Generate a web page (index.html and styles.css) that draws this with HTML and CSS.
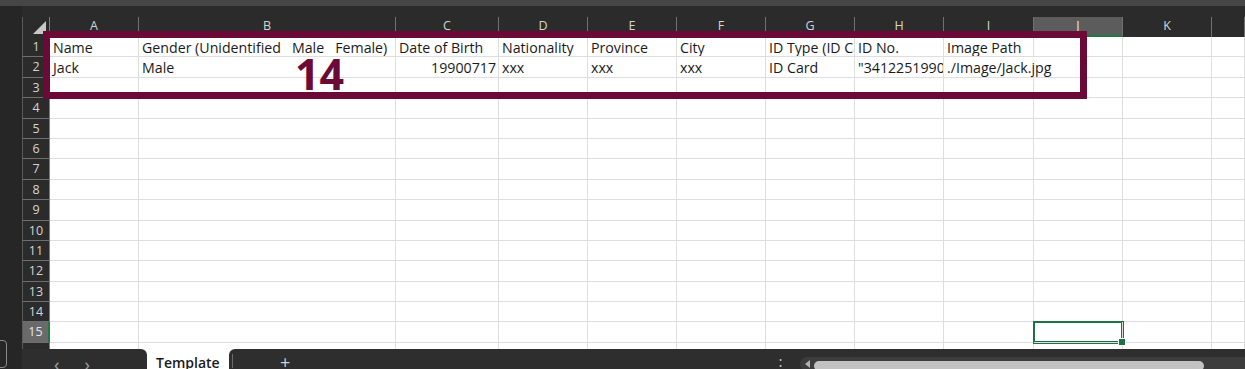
FILE: index.html
```html
<!DOCTYPE html>
<html lang="en">
<head>
    <meta charset="UTF-8">
    <title>Template - Sheet</title>
    <link rel="stylesheet" href="styles.css">
</head>
<body>

    <div class="app">
        <div class="edge"></div>

        <div class="main">
            <!-- Left gutter -->
            <div class="gutter">
                <div class="gutter-btn"></div>
            </div>

            <div class="workspace">
                <div class="spacer"></div>

                <!-- Sheet grid, filled by the script below -->
                <div class="grid" id="grid"></div>

                <!-- Sheet tabs -->
                <div class="tabbar">
                    <div class="tab-nav">
                        <span class="arrow">&lsaquo;</span>
                        <span class="arrow">&rsaquo;</span>
                    </div>
                    <div class="tab active">Template</div>
                    <div class="tab-rest">
                        <span class="sep"></span>
                        <span class="add">+</span>
                        <span class="dots">&#8942;</span>
                        <div class="hscroll">
                            <span class="left-arrow"></span>
                            <span class="thumb"></span>
                        </div>
                    </div>
                </div>
            </div>
        </div>

        <!-- Annotation over the sheet -->
        <div class="mark"></div>
        <div class="mark-label">14</div>
    </div>

    <script>
        const columns = ['A', 'B', 'C', 'D', 'E', 'F', 'G', 'H', 'I', 'J', 'K', ''];
        const data = [
            ['Name', 'Gender (Unidentified   Male   Female)', 'Date of Birth', 'Nationality', 'Province', 'City', 'ID Type (ID Card  Passport)', 'ID No.', 'Image Path'],
            ['Jack', 'Male', '19900717', 'xxx', 'xxx', 'xxx', 'ID Card', '"341225199001010000"', './Image/Jack.jpg']
        ];
        const grid = document.getElementById('grid');

        function cell(cls, text) {
            const div = document.createElement('div');
            div.className = cls;
            div.textContent = text || '';
            grid.appendChild(div);
            return div;
        }

        // Column headers
        const corner = cell('corner');
        corner.innerHTML = '<span class="tri"></span>';
        columns.forEach(col => {
            cell(col === 'J' ? 'col-head selected' : 'col-head', col);
        });

        // Rows
        for (let r = 1; r <= 16; r++) {
            cell(r === 15 ? 'row-head selected' : 'row-head', r <= 15 ? r : '');
            const row = data[r - 1] || [];
            columns.forEach((col, i) => {
                const c = cell('cell', row[i]);
                if (r === 2 && col === 'C') c.classList.add('num');
                if (r === 2 && col === 'I') c.classList.add('spill');
                if (r === 15 && col === 'J') {
                    c.classList.add('active');
                    c.innerHTML = '<span class="handle"></span>';
                }
            });
        }
    </script>
</body>
</html>
```

FILE: styles.css
```css
body {
    margin: 0;
    padding: 0;
    background-color: #262626;
    font-family: "Open Sans", Arial, sans-serif;
}

.app {
    position: relative;
    width: 1245px;
    height: 369px;
    display: flex;
    flex-direction: column;
    overflow: hidden;
}

.edge {
    height: 6px;
    background-color: #464646;
    flex-shrink: 0;
}

.main {
    flex: 1;
    display: flex;
    min-height: 0;
}

.gutter {
    width: 22px;
    flex-shrink: 0;
    background-color: #262626;
    display: flex;
    flex-direction: column;
    justify-content: flex-end;
}

.gutter-btn {
    width: 9px;
    height: 26px;
    margin-left: -4px;
    margin-bottom: 1px;
    border: 1px solid #8a8a8a;
    border-radius: 4px;
}

.workspace {
    flex: 1;
    display: flex;
    flex-direction: column;
    min-width: 0;
}

.spacer {
    height: 11px;
    background-color: #2b2b2b;
    flex-shrink: 0;
}

/* Sheet */

.grid {
    flex: 1;
    min-height: 0;
    overflow: hidden;
    display: grid;
    grid-template-columns: 28px 89px 257px 103px 89px 89px 89px 89px 89px 90px 89px 89px 1fr;
    grid-template-rows: 20px;
    grid-auto-rows: 20.4px;
    background-color: #ffffff;
    font-size: 14.2px;
    color: #1a1a1a;
}

.corner,
.col-head,
.row-head {
    background-color: #2b2b2b;
    color: #d4d4d4;
    box-sizing: border-box;
    font-size: 12.5px;
}

.corner {
    position: relative;
    border-left: 1px solid #5a5a5a;
    border-right: 1px solid #7a7a7a;
}

.tri {
    position: absolute;
    right: 3px;
    bottom: 3px;
    width: 13px;
    height: 13px;
    background-color: #c8c8c8;
    clip-path: polygon(100% 0, 100% 100%, 0 100%);
}

.col-head {
    text-align: center;
    line-height: 18px;
    border-right: 1px solid #707070;
}

.col-head.selected {
    background-color: #5c5c5c;
    color: #e8e8e8;
    border-bottom: 2px solid #1e7a45;
}

.row-head {
    text-align: center;
    line-height: 20px;
    border-left: 1px solid #5a5a5a;
    border-bottom: 1px solid #6e6e6e;
    border-right: 1px solid #7a7a7a;
}

.row-head.selected {
    background-color: #6a6a6a;
    color: #e6e6e6;
    border-right: 2px solid #1e7a45;
}

.cell {
    position: relative;
    box-sizing: border-box;
    padding: 1px 3px 0 3px;
    line-height: 20px;
    white-space: pre;
    overflow: hidden;
    border-right: 1px solid #dedede;
    border-bottom: 1px solid #dedede;
}

.cell.num {
    text-align: right;
    padding-right: 2px;
}

.cell.spill {
    overflow: visible;
    border-right: none;
    z-index: 1;
}

.cell.active {
    overflow: visible;
    box-shadow: 0 0 0 1px #1e7145, inset 0 0 0 1px #1e7145;
    z-index: 2;
}

.handle {
    position: absolute;
    right: -4px;
    bottom: -4px;
    width: 6px;
    height: 6px;
    background-color: #1e7145;
    border: 1px solid #ffffff;
}

/* Sheet tabs */

.tabbar {
    height: 20px;
    flex-shrink: 0;
    display: flex;
    background-color: #ffffff;
}

.tab-nav {
    width: 125px;
    background-color: #2e2e2e;
    border-top-right-radius: 6px;
    display: flex;
    gap: 25px;
    padding-left: 32px;
    box-sizing: border-box;
}

.arrow {
    color: #a0a0a0;
    font-size: 18px;
    line-height: 30px;
}

.tab {
    width: 82px;
    padding-left: 9px;
    box-sizing: border-box;
    font-size: 14px;
    font-weight: 600;
    color: #1a1a1a;
    line-height: 28px;
}

.tab-rest {
    flex: 1;
    background-color: #2e2e2e;
    border-top-left-radius: 6px;
    display: flex;
    align-items: flex-start;
    position: relative;
}

.sep {
    width: 1px;
    height: 14px;
    margin: 5px 0 0 3px;
    background-color: #6a6a6a;
}

.add {
    color: #cfcfcf;
    font-size: 18px;
    line-height: 26px;
    margin-left: 47px;
}

.dots {
    color: #bdbdbd;
    font-size: 15px;
    line-height: 30px;
    margin-left: 483px;
}

.hscroll {
    margin-left: 12px;
    margin-top: 8px;
    flex: 1;
    height: 14px;
    background-color: #3c3c3c;
    border-radius: 7px 0 0 7px;
    display: flex;
    align-items: flex-start;
    padding-left: 5px;
}

.left-arrow {
    width: 0;
    height: 0;
    margin-top: 3px;
    border-top: 4px solid transparent;
    border-bottom: 4px solid transparent;
    border-right: 5px solid #b0b0b0;
}

.thumb {
    margin-left: 4px;
    margin-top: 4px;
    width: 390px;
    height: 10px;
    background-color: #c2c2c2;
    border-radius: 5px;
}

/* Annotation */

.mark {
    position: absolute;
    left: 43px;
    top: 31px;
    width: 1044px;
    height: 68px;
    box-sizing: border-box;
    border: 7px solid #6b0a37;
    pointer-events: none;
}

.mark-label {
    position: absolute;
    left: 295px;
    top: 52px;
    font-size: 43px;
    line-height: 1;
    font-weight: 700;
    color: #6b0a37;
}
```
